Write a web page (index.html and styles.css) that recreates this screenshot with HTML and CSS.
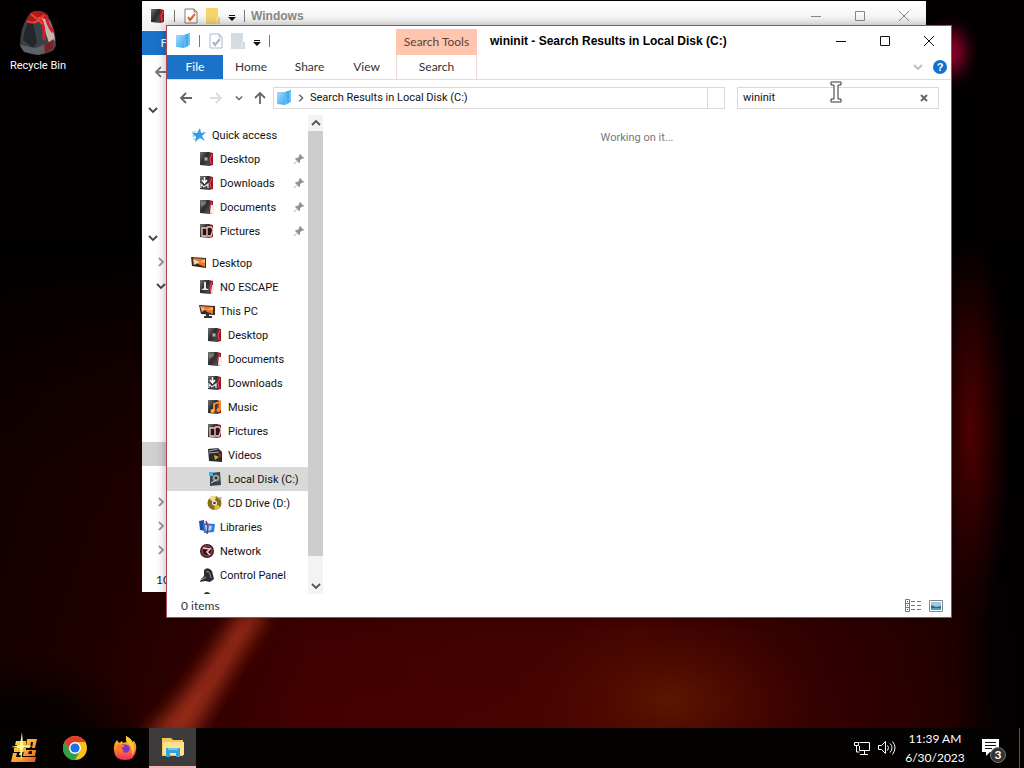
FILE: index.html
```html
<!DOCTYPE html>
<html lang="en">
<head>
    <meta charset="UTF-8">
    <meta name="viewport" content="width=device-width, initial-scale=1.0">
    <title>wininit - Search Results in Local Disk (C:)</title>
    <link rel="stylesheet" href="styles.css">
</head>
<body>
    <!-- icon sprite -->
    <svg class="sprite" aria-hidden="true">
        <defs>
            <linearGradient id="gDark" x1="0" y1="0" x2="1" y2="1"><stop offset="0" stop-color="#777"/><stop offset=".5" stop-color="#2b2b30"/><stop offset="1" stop-color="#555"/></linearGradient>
            <linearGradient id="gBlue" x1="0" y1="0" x2="1" y2="1"><stop offset="0" stop-color="#a6dcff"/><stop offset="1" stop-color="#3fa9ee"/></linearGradient>
            <linearGradient id="gFire" x1="0" y1="0" x2="0" y2="1"><stop offset="0" stop-color="#ffd43b"/><stop offset=".5" stop-color="#ff8a1f"/><stop offset="1" stop-color="#f0266f"/></linearGradient>
            <linearGradient id="gStart" x1="0" y1="0" x2="1" y2="1"><stop offset="0" stop-color="#ffe94a"/><stop offset=".6" stop-color="#ff9a2e"/><stop offset="1" stop-color="#e8501c"/></linearGradient>
        </defs>
        <symbol id="box" viewBox="0 0 16 16">
            <path d="M1 1l9 0v14l-9-1z" fill="url(#gDark)"/>
            <path d="M10 1l4 1v12l-4 1z" fill="#8e1a24"/>
            <path d="M13 3l-2 5 1 5" stroke="#f0505a" stroke-width="1" fill="none"/>
        </symbol>
        <symbol id="i-desktop" viewBox="0 0 16 16"><use href="#box"/><path d="M5 6h4v4H5z" fill="#77705a"/><path d="M6 7h2v2H6z" fill="#c3b98c"/></symbol>
        <symbol id="i-downloads" viewBox="0 0 16 16"><use href="#box"/><path d="M5.500 2v5M3 5l2.500 3L8 5" stroke="#fff" stroke-width="1.500" fill="none"/><path d="M2 13V9l3 3 4-3v4" stroke="#dde" stroke-width="1.300" fill="none"/></symbol>
        <symbol id="i-documents" viewBox="0 0 16 16"><use href="#box"/><path d="M12 6h3v9l-4-1z" fill="#f2eeee"/><path d="M2 3l5-1v3L2 8z" fill="#999" opacity=".6"/></symbol>
        <symbol id="i-pictures" viewBox="0 0 16 16"><use href="#box"/><path d="M3 5h5v8H3zM8 4h4l2 3-2 6H9" stroke="#e3cdb8" stroke-width="1.300" fill="#301014"/></symbol>
        <symbol id="i-monitor" viewBox="0 0 16 16"><path d="M0 2l15 1v10L1 11z" fill="#38281f"/><path d="M2 3l12 1v8L7 9z" fill="#e8762a"/><path d="M2 4l7 3-6 3z" fill="#f2d0b0"/><path d="M9 7l5-3v4z" fill="#ffb55e"/></symbol>
        <symbol id="i-pc" viewBox="0 0 16 16"><path d="M0 2l16 1v9L2 11z" fill="#38281f"/><path d="M2 3l12 1v7L8 9z" fill="#e8762a"/><path d="M1 3l6 3-4 3z" fill="#e0b48c"/><path d="M7 7l7-3v3z" fill="#ffb55e"/><path d="M7 11h3v2h3v2H5v-2h2z" fill="#333"/></symbol>
        <symbol id="i-user" viewBox="0 0 16 16"><use href="#box"/><path d="M5 3h2v6l3 2H2l3-2z" fill="#e6e6e6"/><path d="M13 6h2v8h-3z" fill="#eee"/></symbol>
        <symbol id="i-music" viewBox="0 0 16 16"><use href="#box"/><path d="M7 12V5l6-2v8" stroke="#ff9a1c" stroke-width="1.800" fill="none"/><circle cx="5.500" cy="12" r="2" fill="#ffb52e"/><circle cx="11.500" cy="11" r="2" fill="#ff8a1c"/></symbol>
        <symbol id="i-videos" viewBox="0 0 16 16"><path d="M1 2l10-1 4 4v10L2 14z" fill="#2b2a28"/><path d="M2 4l9-2M2 6l10-1" stroke="#aaa"/><path d="M7 8l5 2-4 3z" fill="#d3b13c"/><path d="M12 6l2 1v3h-2z" fill="#b22"/></symbol>
        <symbol id="i-disk" viewBox="0 0 16 16"><path d="M3 2l10-1 1 13-11 1z" fill="#3c4348"/><path d="M2 1h4v4H2z" fill="#39aef0"/><circle cx="9" cy="7" r="3.500" fill="#8f999e"/><circle cx="9" cy="7" r="1.200" fill="#222"/><path d="M4 12l5-3" stroke="#ddd"/></symbol>
        <symbol id="i-cd" viewBox="0 0 16 16"><circle cx="7.500" cy="8" r="7" fill="#8a6a1c"/><path d="M7.500 8L2 3.500A7 7 0 0 1 9 1z" fill="#f0dc7a"/><path d="M7.500 8l6 4a7 7 0 0 1-6 3z" fill="#e5b93e"/><circle cx="7.500" cy="8" r="2.500" fill="#eee"/><circle cx="7.500" cy="8" r="1.300" fill="#333"/><path d="M9 2h6l-1 3z" fill="#b9b9a8"/></symbol>
        <symbol id="i-libraries" viewBox="0 0 16 16"><path d="M0 2l5-1 1 11-5-1z" fill="#1c4fae"/><path d="M4 4l12 1-1 8-10 1z" fill="#2f7fe0"/><path d="M6 6l7 1-1 4-5 1z" fill="#a8d6ff"/><path d="M7 2l2 5-1 8" stroke="#b81f2f" stroke-width="1.500" fill="none"/></symbol>
        <symbol id="i-network" viewBox="0 0 16 16"><circle cx="8" cy="8" r="7" fill="#35181c"/><circle cx="8" cy="8" r="5" fill="none" stroke="#a33a44" stroke-width="1.500"/><path d="M4 5l7 1-3 3 3 3" stroke="#e7d6d8" stroke-width="1.500" fill="none"/></symbol>
        <symbol id="i-control" viewBox="0 0 16 16"><path d="M5 3q4-4 8 1l2 8-4 3-5-1-5 1 1-3 3-3z" fill="#2a2c2f"/><path d="M7 5q3-2 4 2l1 4" stroke="#8a8f94" fill="none"/><path d="M2 13l5-3" stroke="#aaa"/></symbol>
        <symbol id="i-recycle" viewBox="0 0 16 16"><path d="M3 5q5-8 10 0l1 10H3z" fill="#333"/></symbol>
        <symbol id="i-star" viewBox="0 0 16 16"><path d="M9 1l1 5 5-1-4 4 3 5-5-3-5 4 1-5-4-4 5 0z" fill="#2f9fe6"/><path d="M1 5h4M1 9h3M2 12h3" stroke="#7cc4f2"/></symbol>
        <symbol id="i-pin" viewBox="0 0 12 12"><path d="M7 1l4 4-1 1-1-.4-2 2L7 9.500 6 10 4 8 1 11.500.5 11 4 7.500 2 6l.5-1H4.500l2-2.200L6 2z" fill="#8b949b"/></symbol>
        <symbol id="i-folders" viewBox="0 0 16 16"><path d="M1 2l8 0v13l-8-1z" fill="url(#gBlue)"/><path d="M9 2l2-1v13l-2 1z" fill="#5cb9f4"/><path d="M11 1h2v12l-2 1z" fill="#41aaeb"/><path d="M13 0h2v12l-2 1z" fill="#6cc2f6"/></symbol>
        <symbol id="i-props" viewBox="0 0 14 16"><path d="M1 1h9l3 3v11H1z" fill="#fff" stroke="currentColor"/><path d="M10 1v3h3" fill="none" stroke="currentColor"/></symbol>
        <symbol id="i-newfolder" viewBox="0 0 14 16"><path d="M0 0h12v9h2v7H0z" fill="currentColor"/><path d="M11 9v6" stroke="#fff" opacity=".5"/></symbol>
        <symbol id="i-more" viewBox="0 0 8 6"><path d="M1 0h6v1H1zM0 2h8L4 6z" fill="currentColor"/></symbol>
        <symbol id="i-min" viewBox="0 0 12 12"><path d="M1 6.500h10" stroke="currentColor"/></symbol>
        <symbol id="i-max" viewBox="0 0 12 12"><path d="M1.500 1.500h9v9h-9z" fill="none" stroke="currentColor"/></symbol>
        <symbol id="i-close" viewBox="0 0 12 12"><path d="M1 1l10 10M11 1L1 11" stroke="currentColor" fill="none"/></symbol>
        <symbol id="i-down" viewBox="0 0 10 10"><path d="M1 3l4 4 4-4" fill="none" stroke="currentColor" stroke-width="1.800"/></symbol>
        <symbol id="i-up" viewBox="0 0 10 10"><path d="M1 7l4-4 4 4" fill="none" stroke="currentColor" stroke-width="1.800"/></symbol>
        <symbol id="i-right" viewBox="0 0 10 10"><path d="M3 1l4 4-4 4" fill="none" stroke="currentColor" stroke-width="1.800"/></symbol>
        <symbol id="i-arrow" viewBox="0 0 14 14"><path d="M13 7H2M7 2L2 7l5 5" fill="none" stroke="currentColor" stroke-width="1.800"/></symbol>
    </svg>

    <div class="desktop">
        <svg class="wallpaper" viewBox="0 0 1024 768" preserveAspectRatio="none" aria-hidden="true">
            <defs>
                <filter id="soft" x="-50%" y="-50%" width="200%" height="200%"><feGaussianBlur stdDeviation="9"/></filter>
                <linearGradient id="floor" x1="0" x2="1"><stop offset="0" stop-color="#1a0000"/><stop offset=".14" stop-color="#2a0000"/><stop offset=".3" stop-color="#460000"/><stop offset=".62" stop-color="#4c0500"/><stop offset=".84" stop-color="#320000"/><stop offset=".93" stop-color="#240000"/><stop offset=".97" stop-color="#060003"/><stop offset="1" stop-color="#020002"/></linearGradient>
                <linearGradient id="fade" x1="0" x2="0" y1="0" y2="1"><stop offset="0" stop-color="#000"/><stop offset=".45" stop-color="#bbb"/><stop offset="1" stop-color="#fff"/></linearGradient>
                <mask id="rise"><rect y="240" width="1024" height="528" fill="url(#fade)"/></mask>
                <radialGradient id="glow"><stop offset="0" stop-color="#5c1600"/><stop offset="1" stop-color="#4c0500" stop-opacity="0"/></radialGradient>
                <radialGradient id="side"><stop offset="0" stop-color="#500000"/><stop offset=".5" stop-color="#300000" stop-opacity=".8"/><stop offset="1" stop-color="#200000" stop-opacity="0"/></radialGradient>
                <radialGradient id="shade"><stop offset="0" stop-color="#000"/><stop offset=".5" stop-color="#050000" stop-opacity=".8"/><stop offset="1" stop-color="#100000" stop-opacity="0"/></radialGradient>
            </defs>
            <rect width="1024" height="768" fill="#020001"/>
            <rect y="240" width="1024" height="528" fill="url(#floor)" mask="url(#rise)"/>
            <ellipse cx="20" cy="740" rx="130" ry="90" fill="url(#shade)"/>
            <ellipse cx="670" cy="700" rx="150" ry="90" fill="url(#glow)"/>
            <ellipse cx="970" cy="430" rx="42" ry="200" fill="url(#side)"/>
            <ellipse cx="950" cy="52" rx="13" ry="22" fill="#b50034" filter="url(#soft)"/>
            <path d="M245 600L275 600Q225 680 190 740L140 740Q195 690 245 600z" fill="#962a12" filter="url(#soft)"/>
        </svg>

        <a class="shortcut" href="#">
            <svg width="42" height="48" viewBox="0 0 42 48" aria-hidden="true">
                <path d="M3 38Q3 20 11 8Q20-2 31 8Q39 20 39 38Q36 46 21 47Q6 46 3 38z" fill="#3b4046"/>
                <path d="M6 32Q8 15 15 11L20 34 16 40z" fill="#22272d"/>
                <path d="M9 15L13 5Q22 0 30 6L32 13 21 11z" fill="#a81c1c"/>
                <path d="M21 9l11 3q5 10 6 21l-6 2-4-12z" fill="#cbb3b0"/>
                <path d="M23 10q5 8 4 22M29 7q1 9 7 17" stroke="#c8212b" stroke-width="3" fill="none"/>
                <path d="M10 13q8 5 17-6M14 6l12 10" stroke="#ff3a2a" stroke-width="2" fill="none"/>
                <path d="M3 37l16 3 19-8-2 10-15 5-14-3z" fill="#5f6264"/>
                <path d="M27 37l10-6-1 10-8 4z" fill="#7b2025"/>
            </svg>
            <span>Recycle Bin</span>
        </a>

        <!-- window behind -->
        <section class="window back" aria-label="Windows">
            <header class="titlebar">
                <div class="qat">
                    <svg width="16" height="16"><use href="#box"/></svg>
                    <i class="sep"></i>
                    <svg class="props" width="14" height="16"><use href="#i-props"/><path d="M4 9l2 3 5-6" fill="none" stroke="#e0642c" stroke-width="2"/></svg>
                    <svg class="yellow" width="14" height="16"><use href="#i-newfolder"/></svg>
                    <svg class="more" width="8" height="6"><use href="#i-more"/></svg>
                    <i class="sep"></i>
                </div>
                <h2 class="title">Windows</h2>
                <div class="controls">
                    <button aria-label="Minimize"><svg width="12" height="12"><use href="#i-min"/></svg></button>
                    <button aria-label="Maximize"><svg width="12" height="12"><use href="#i-max"/></svg></button>
                    <button aria-label="Close"><svg width="12" height="12"><use href="#i-close"/></svg></button>
                </div>
            </header>
            <nav class="tabs"><button class="tab file">File</button></nav>
            <div class="back-address"><svg width="14" height="14"><use href="#i-arrow"/></svg></div>
            <ul class="back-tree">
                <li class="open"><svg width="10" height="10"><use href="#i-down"/></svg></li>
                <li></li>
                <li></li>
                <li></li>
                <li></li>
                <li class="open group"><svg width="10" height="10"><use href="#i-down"/></svg></li>
                <li class="sub"><svg width="10" height="10"><use href="#i-right"/></svg></li>
                <li class="sub open"><svg width="10" height="10"><use href="#i-down"/></svg></li>
                <li></li>
                <li></li>
                <li></li>
                <li></li>
                <li></li>
                <li></li>
                <li class="selected"></li>
                <li></li>
                <li class="sub"><svg width="10" height="10"><use href="#i-right"/></svg></li>
                <li class="sub"><svg width="10" height="10"><use href="#i-right"/></svg></li>
                <li class="sub"><svg width="10" height="10"><use href="#i-right"/></svg></li>
            </ul>
            <footer class="back-status">10</footer>
        </section>

        <!-- search results window -->
        <main class="window front">
            <header class="titlebar">
                <div class="qat">
                    <svg width="16" height="16"><use href="#i-folders"/></svg>
                    <i class="sep"></i>
                    <svg class="props" width="14" height="16"><use href="#i-props"/><path d="M4 9l2 3 5-6" fill="none" stroke="#9fb4cb" stroke-width="2"/></svg>
                    <svg class="grey" width="14" height="16"><use href="#i-newfolder"/></svg>
                    <svg class="more" width="8" height="6"><use href="#i-more"/></svg>
                    <i class="sep"></i>
                </div>
                <div class="context">Search Tools</div>
                <h1 class="title">wininit - Search Results in Local Disk (C:)</h1>
                <div class="controls">
                    <button aria-label="Minimize"><svg width="12" height="12"><use href="#i-min"/></svg></button>
                    <button aria-label="Maximize"><svg width="12" height="12"><use href="#i-max"/></svg></button>
                    <button aria-label="Close"><svg width="12" height="12"><use href="#i-close"/></svg></button>
                </div>
            </header>

            <nav class="tabs">
                <button class="tab file">File</button>
                <button class="tab">Home</button>
                <button class="tab share">Share</button>
                <button class="tab view">View</button>
                <button class="tab search-tab">Search</button>
                <button class="expand" aria-label="Expand the Ribbon"><svg width="10" height="10"><use href="#i-down"/></svg></button>
                <button class="help" aria-label="Help">?</button>
            </nav>

            <div class="address-row">
                <button class="nav-btn" aria-label="Back"><svg width="14" height="14"><use href="#i-arrow"/></svg></button>
                <button class="nav-btn disabled" aria-label="Forward"><svg class="flip" width="14" height="14"><use href="#i-arrow"/></svg></button>
                <button class="nav-btn recent" aria-label="Recent locations"><svg width="8" height="8"><use href="#i-down"/></svg></button>
                <button class="nav-btn upward" aria-label="Up"><svg class="turn" width="14" height="14"><use href="#i-arrow"/></svg></button>
                <div class="address">
                    <svg width="16" height="16"><use href="#i-folders"/></svg>
                    <svg class="crumb" width="8" height="8"><use href="#i-right"/></svg>
                    <a href="#">Search Results in Local Disk (C:)</a>
                    <button class="refresh" aria-label="Refresh"></button>
                </div>
                <div class="search">
                    <input type="text" value="wininit" aria-label="Search">
                    <button aria-label="Clear search"><svg width="8" height="8" viewBox="0 0 8 8"><path d="M1 1l6 6M7 1L1 7" stroke="currentColor" stroke-width="2"/></svg></button>
                </div>
            </div>

            <div class="body">
                <ul class="tree">
                    <li><svg><use href="#i-star"/></svg><a href="#">Quick access</a></li>
                    <li class="l1"><svg><use href="#i-desktop"/></svg><a href="#">Desktop</a><svg class="pin"><use href="#i-pin"/></svg></li>
                    <li class="l1"><svg><use href="#i-downloads"/></svg><a href="#">Downloads</a><svg class="pin"><use href="#i-pin"/></svg></li>
                    <li class="l1"><svg><use href="#i-documents"/></svg><a href="#">Documents</a><svg class="pin"><use href="#i-pin"/></svg></li>
                    <li class="l1"><svg><use href="#i-pictures"/></svg><a href="#">Pictures</a><svg class="pin"><use href="#i-pin"/></svg></li>
                    <li class="group"><svg><use href="#i-monitor"/></svg><a href="#">Desktop</a></li>
                    <li class="l1"><svg><use href="#i-user"/></svg><a href="#">NO ESCAPE</a></li>
                    <li class="l1"><svg><use href="#i-pc"/></svg><a href="#">This PC</a></li>
                    <li class="l2"><svg><use href="#i-desktop"/></svg><a href="#">Desktop</a></li>
                    <li class="l2"><svg><use href="#i-documents"/></svg><a href="#">Documents</a></li>
                    <li class="l2"><svg><use href="#i-downloads"/></svg><a href="#">Downloads</a></li>
                    <li class="l2"><svg><use href="#i-music"/></svg><a href="#">Music</a></li>
                    <li class="l2"><svg><use href="#i-pictures"/></svg><a href="#">Pictures</a></li>
                    <li class="l2"><svg><use href="#i-videos"/></svg><a href="#">Videos</a></li>
                    <li class="l2 selected"><svg><use href="#i-disk"/></svg><a href="#">Local Disk (C:)</a></li>
                    <li class="l2"><svg><use href="#i-cd"/></svg><a href="#">CD Drive (D:)</a></li>
                    <li class="l1"><svg><use href="#i-libraries"/></svg><a href="#">Libraries</a></li>
                    <li class="l1"><svg><use href="#i-network"/></svg><a href="#">Network</a></li>
                    <li class="l1"><svg><use href="#i-control"/></svg><a href="#">Control Panel</a></li>
                    <li class="l1"><svg><use href="#i-recycle"/></svg></li>
                </ul>
                <div class="scrollbar">
                    <button aria-label="Scroll up"><svg width="10" height="10"><use href="#i-up"/></svg></button>
                    <div class="track"><div class="thumb"></div></div>
                    <button aria-label="Scroll down"><svg width="10" height="10"><use href="#i-down"/></svg></button>
                </div>
                <div class="results">Working on it...</div>
            </div>

            <footer class="status">
                <span>0 items</span>
                <button aria-label="Details view">
                    <svg width="16" height="14" viewBox="0 0 16 14"><path d="M.5.500h4v12h-4zM.5 4.500h4M.5 8.500h4M6 2.500h4M12 2.500h4M6 6.500h4M12 6.500h4M6 10.500h4M12 10.500h4" fill="none" stroke="#777"/><path d="M2 2h1v1H2zM2 6h1v1H2zM2 10h1v1H2z" fill="#555"/></svg>
                </button>
                <button aria-label="Large icons view">
                    <svg width="14" height="12" viewBox="0 0 14 12"><path d="M.5.500h13v11H.5z" fill="#fff" stroke="#888"/><path d="M2 2h10v8H2z" fill="#9cc9e6"/><path d="M2 5l5 2 5-1v4H2z" fill="#27688f"/><path d="M2 8h10v2H2z" fill="#4d9fc0"/></svg>
                </button>
            </footer>
        </main>

        <svg class="cursor" width="12" height="22" viewBox="0 0 12 22" aria-hidden="true"><path d="M1 1h10v3H8v14h3v3H1v-3h3V4H1z" fill="#fff" stroke="#333"/></svg>
    </div>

    <footer class="taskbar">
        <button aria-label="Start">
            <svg width="28" height="32" viewBox="0 0 28 32">
                <path d="M5 9h10v4h-4v3h4v4H3v-4h3v-3H4zM16 7h10l-2 9h-3l1-6h-2l-1 6h-4zM2 21h4l-1 4h20l-1 5H0zM13 18h12l-1 6H12zM8 21h3v2H8z" fill="url(#gStart)"/>
                <path d="M18 19h3v3h-4z" fill="#2b0800"/>
                <path d="M11 0l1 13 10 1-10 2-2 13-1-13-9-1 9-2z" fill="#ffff9c"/>
            </svg>
        </button>
        <button class="chrome" aria-label="Google Chrome">
            <svg width="24" height="24" viewBox="0 0 24 24">
                <circle cx="12" cy="12" r="12" fill="#fbc116"/>
                <path d="M12 6h10.400A12 12 0 0 0 1.600 6l5.200 9z" fill="#e33b2e"/>
                <path d="M1.600 6A12 12 0 0 0 12 24l5.200-9L12 18 6.800 15z" fill="#2da04b"/>
                <circle cx="12" cy="12" r="6" fill="#fff"/><circle cx="12" cy="12" r="4.600" fill="#1c73e8"/>
            </svg>
        </button>
        <button aria-label="Firefox">
            <svg width="24" height="24" viewBox="0 0 24 24">
                <path d="M4 4l2 3 3-2 1 2q2-1 4-1l-1-6q6 3 6 6l2-1q3 4 2 9-1 10-11 10T1 15Q0 9 4 4z" fill="url(#gFire)"/>
                <path d="M8 9q4-2 8 1 2 4-1 6-4 2-6-1l2 0q-3-2-3-6z" fill="#7a36cc"/>
                <path d="M4 9q6-2 8 2-3 0-5 1 1 2 4 3-4 2-6-1-2-2-1-5z" fill="#ff7a27"/>
                <path d="M13 0q6 3 7 8 3 6-1 11 1-9-6-14z" fill="#ffc73a"/>
            </svg>
        </button>
        <button class="active" aria-label="File Explorer">
            <svg width="24" height="20" viewBox="0 0 24 20">
                <path d="M1 1h9l2 2h10v16H1z" fill="#f3c85b"/><path d="M2 5h21v13H2z" fill="#ffe28e"/>
                <path d="M5 11h14v9h-4v-4H9v4H5z" fill="#35a0dc"/><path d="M7 11h10v2H7z" fill="#71c4ee"/>
            </svg>
        </button>
        <div class="tray">
            <svg width="17" height="16" viewBox="0 0 17 16" fill="none" stroke="#fff"><path d="M5.500 2.500h10v8h-10V6M.5 2.500h4v3h-4zM2.500 6v6h3M10.500 11v3M6 14.500h8"/></svg>
            <svg width="18" height="16" viewBox="0 0 18 16" fill="none" stroke="#fff"><path d="M.5 5.500h3l4-4v12l-4-4h-3zM9.500 5.500q2 2 0 5M12 3.500q4 4 0 9M14.500 1.500q5 6 0 13"/></svg>
            <time class="clock">11:39 AM<br>6/30/2023</time>
            <button class="notify" aria-label="Notifications">
                <svg width="17" height="18" viewBox="0 0 17 18"><path d="M0 0h17v13H8l-4 4v-4H0z" fill="#fff"/><path d="M3 3.500h11M3 6.500h11M3 9.500h7" stroke="#111"/></svg>
                <span class="badge">3</span>
            </button>
        </div>
    </footer>
</body>
</html>
```

FILE: styles.css
```css
* { box-sizing: border-box; }
body { margin: 0; height: 100vh; display: flex; flex-direction: column; overflow: hidden; background: #020001; color: #111; font: 11px/16px Roboto, "Liberation Sans", sans-serif; }
button { padding: 0; border: 0; background: none; color: inherit; font: inherit; }
svg { display: block; flex: none; }
a { color: inherit; text-decoration: none; }
ul { list-style: none; margin: 0; padding: 0; }
.sprite { position: absolute; width: 0; height: 0; }

.desktop { flex: 1; position: relative; min-height: 0; }
.wallpaper { position: absolute; inset: 0; width: 100%; height: 100vh; }
.shortcut { position: absolute; left: 0; top: 8px; width: 76px; display: flex; flex-direction: column; align-items: center; gap: 2px; color: #fff; }

/* windows */
.window { position: absolute; display: flex; flex-direction: column; background: #fff; }
.back { left: 142px; right: 98px; top: 1px; bottom: 136px; color: #222; }
.front { left: 166px; right: 72px; top: 25px; bottom: 110px; border: 1px solid #b04450; box-shadow: 0 0 10px rgba(0, 0, 0, 0.3); }

.titlebar { display: flex; align-items: center; height: 29px; flex: none; }
.back .titlebar { background: linear-gradient(#fff, #f0f0f0); }
.qat { display: flex; align-items: center; gap: 8px; padding-left: 8px; width: 229px; }
.back .qat { width: 109px; }
.sep { width: 1px; height: 12px; background: #777; margin-right: 1px; }
.props { color: #a9bccf; }
.back .props { color: #8a7a70; }
.yellow { color: #f5d56e; }
.grey { color: #d5dbe3; }
.more { color: #111; margin-top: 4px; }
.context { align-self: flex-end; width: 81px; height: 26px; background: #ffc5ae; color: #5b4038; font: 12px/26px Lato, sans-serif; text-align: center; }
.title { margin: 0; flex: 1; font: bold 12px/16px "Liberation Sans", sans-serif; color: #000; white-space: nowrap; }
.front .title { padding-left: 13px; }
.back .title { color: #888; }
.controls { display: flex; align-self: stretch; }
.controls button { width: 44px; display: grid; place-items: center; }
.back .controls { color: #888; }

.tabs { display: flex; align-items: center; height: 25px; flex: none; border-bottom: 1px solid #dcdcdc; color: #333; font: 12px/24px Lato, sans-serif; }
.back .tabs { border: 0; }
.tab { width: 56px; height: 24px; }
.share { width: 61px; }
.view { width: 53px; margin-right: 3px; }
.file { background: #1a73c9; color: #fff; }
.search-tab { width: 81px; border: solid #ecdcd6; border-width: 0 1px; }
.expand { margin-left: auto; color: #bbb; }
.help { width: 14px; height: 14px; margin: 0 4px 0 10px; border-radius: 50%; background: #1173cf; color: #fff; font: bold 11px/14px "Liberation Sans", sans-serif; }

.address-row { display: flex; align-items: center; height: 35px; flex: none; padding: 0 12px; }
.nav-btn { width: 14px; color: #666; margin-right: 16px; }
.disabled { color: #ddd; margin-right: 12px; }
.recent { width: 8px; margin-right: 10px; }
.upward { margin-right: 6px; }
.flip { transform: scaleX(-1); }
.turn { transform: rotate(90deg); }
.address { flex: 1; display: flex; align-items: center; height: 22px; border: 1px solid #d9d9d9; padding-left: 2px; }
.crumb { margin: 0 5px; color: #666; }
.refresh { width: 17px; height: 20px; margin-left: auto; border-left: 1px solid #d9d9d9; }
.search { display: flex; align-items: center; width: 202px; height: 22px; margin-left: 12px; border: 1px solid #d9d9d9; }
.search input { flex: 1; min-width: 0; border: 0; outline: 0; padding: 0 5px; background: none; color: #111; font: inherit; }
.search button { color: #666; padding: 0 10px; }

.body { flex: 1; min-height: 0; display: flex; }
.tree { width: 141px; padding-top: 8px; overflow: hidden; flex: none; }
.tree li { display: flex; align-items: center; gap: 5px; height: 24px; padding-left: 24px; white-space: nowrap; }
.tree a { padding-top: 1px; }
.tree svg { width: 16px; height: 16px; }
.tree .l1 { padding-left: 32px; }
.tree .l2 { padding-left: 40px; }
.tree .group { margin-top: 8px; }
.tree .selected { background: #d9d9d9; }
.tree .pin { width: 12px; height: 12px; margin: 0 3px 0 auto; }
.scrollbar { width: 15px; display: flex; flex-direction: column; background: #f3f3f3; color: #555; }
.scrollbar button { height: 16px; display: grid; place-items: center; }
.track { flex: 1; }
.thumb { height: 95%; background: #cdcdcd; }
.results { flex: 1; padding-top: 15px; text-align: center; color: #777; }

.status { display: flex; align-items: center; gap: 8px; height: 23px; flex: none; padding: 0 8px 0 14px; color: #333; font: 12px/16px Lato, sans-serif; }
.status span { flex: 1; }

/* the strip of the window behind that stays visible */
.back-address { height: 36px; padding: 10px 0 0 12px; color: #777; }
.back-tree { padding-top: 7px; flex: 1; min-height: 0; overflow: hidden; color: #999; }
.back-tree li { height: 24px; padding: 7px 0 0 6px; }
.back-tree .sub { padding-left: 14px; }
.back-tree .group { margin-top: 8px; }
.back-tree .open { color: #444; }
.back-tree .selected { background: #d0d0d0; }
.back-status { height: 23px; padding: 3px 0 0 14px; font: 12px/16px Lato, sans-serif; }

.cursor { position: absolute; left: 830px; top: 81px; }

/* taskbar */
.taskbar { position: relative; display: flex; height: 40px; flex: none; background: #050202; color: #fff; }
.taskbar > button { width: 49px; display: grid; place-items: center; }
.taskbar > .chrome { width: 51px; }
.taskbar > .active { width: 47px; background: #3d3b3b; border-bottom: 2px solid #f5b5b5; }
.tray { margin-left: auto; display: flex; align-items: center; gap: 7px; padding-right: 4px; }
.clock { width: 64px; text-align: center; font: 12px/19px Lato, sans-serif; white-space: nowrap; }
.notify { position: relative; width: 46px; height: 40px; padding: 0 0 0 8px; border-right: 1px solid #555; }
.badge { position: absolute; left: 16px; top: 19px; width: 16px; height: 16px; border: 1px solid #777; border-radius: 50%; background: #333; font: bold 12px/14px Lato, sans-serif; text-align: center; }
```
